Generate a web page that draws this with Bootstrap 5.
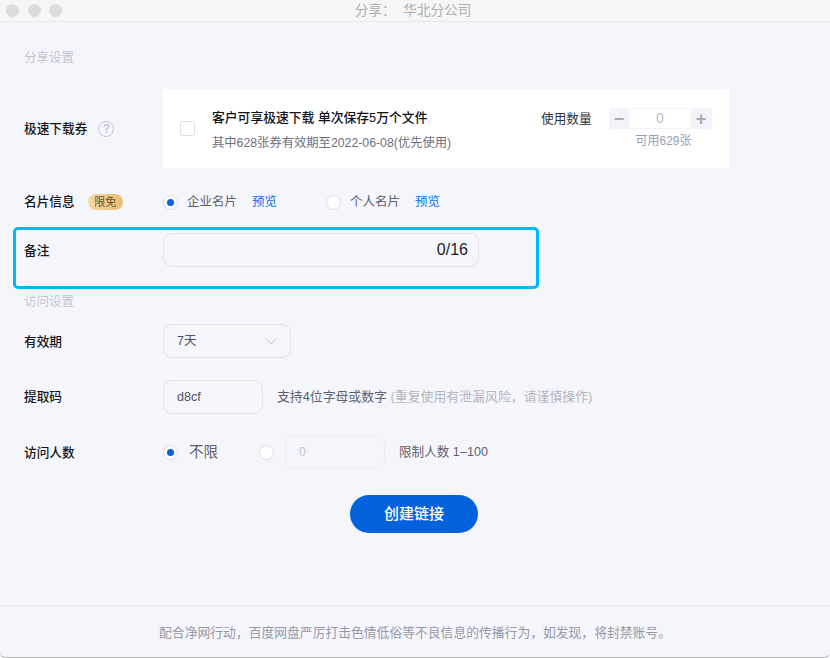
<!DOCTYPE html>
<html lang="zh-CN">
  <head>
    <meta charset="UTF-8" />
    <title>分享</title>
    <link href="https://cdn.jsdelivr.net/npm/bootstrap@5.3.2/dist/css/bootstrap.min.css" rel="stylesheet" />
    <style>
      html, body { height: 658px; overflow: hidden; }
      body {
        background: #f5f6fb;
        color: #1b1c22;
        font-family: "Liberation Sans", "Noto Sans CJK SC", sans-serif;
        font-size: 12px;
      }
      .win-shell { width: 830px; height: 658px; border-bottom: 1px solid #b4b4b4; border-radius: 0 0 6px 6px; }
      .title-bar { height: 22px; background: #f6f6f6; border-bottom: 1px solid #e9e9ea; padding-left: 6px; }
      .light { width: 13px; height: 13px; border-radius: 50%; background: #dcdcdc; margin-right: 8.5px; }
      .title-text { left: 0; right: 4px; top: 2px; text-align: center; font-size: 13.6px; line-height: 18px; color: #aeaeae; word-spacing: 4px; }
      .form-area { padding: 0 24px; }
      .sec-title { color: #c3c5d0; font-size: 12.5px; line-height: 18px; }
      .field-label { width: 139px; flex: none; font-size: 12.7px; font-weight: 500; color: #15161c; line-height: 18px; }
      .label-low { padding-top: 2px; }
      .help-mark { width: 16px; height: 16px; border: 1px solid #c5c6d0; border-radius: 50%; color: #b4b6c2; font-size: 12px; line-height: 14px; text-align: center; margin-left: 11px; font-weight: 400; }
      .free-tag { width: 35px; height: 16px; margin-left: 13px; border-radius: 8px; background: linear-gradient(90deg, #f4d9a6, #e9bb72); color: #6e5330; font-size: 11px; line-height: 16px; text-align: center; font-weight: 400; }
      .voucher-box { width: 566px; height: 79px; background: #fff; padding: 0 17px; }
      .fake-check { width: 15px; height: 15px; border: 1px solid #dfe0e6; border-radius: 2px; margin-right: 17px; }
      .voucher-text { padding-top: 2px; }
      .voucher-head { font-size: 12.8px; font-weight: 500; color: #111217; line-height: 18px; }
      .voucher-sub { font-size: 12.3px; color: #6d6f7e; line-height: 16px; margin-top: 8px; }
      .qty-label { font-size: 12.7px; color: #30313a; line-height: 18px; width: 68px; }
      .stepper { width: 103px; height: 21px; background: #f3f4f9; border-radius: 4px; }
      .stepper-val { width: 62px; background: #fff; color: #bfc1cb; font-size: 14px; line-height: 19px; text-align: center; }
      .step-mark { width: 20px; color: #a8aab6; font-size: 18px; font-weight: 700; line-height: 20px; text-align: center; }
      .avail-text { font-size: 12px; color: #9a9caa; line-height: 16px; text-align: center; margin-top: 4px; width: 103px; margin-left: 71px; }
      .qty-box { width: 171px; }
      .fake-radio { width: 15px; height: 15px; border: 1px solid #dcdde4; border-radius: 50%; background: #fff; flex: none; }
      .fake-radio.is-on::after { content: ""; display: block; width: 7px; height: 7px; margin: 3px; border-radius: 50%; background: #0463dc; }
      .radio-text { color: #5d5f6e; font-size: 12.5px; line-height: 18px; margin-left: 9px; }
      .preview-link { color: #0a6fe8; font-size: 12.5px; line-height: 18px; margin-left: 15px; text-decoration: none; }
      .note-frame { width: 526px; height: 62px; margin: 16px 0 0 -11px; border: 3px solid #00b8ff; border-radius: 5px; padding: 3px 0 0 8px; }
      .box-field { border: 1px solid #e3e4ea; border-radius: 9px; height: 34px; color: #50525f; font-size: 12.5px; line-height: 32px; }
      .note-input { width: 316px; text-align: right; padding-right: 10px; color: #1c1d24; font-size: 16px; }
      .note-label { width: 139px; padding-top: 9px; }
      .term-select { width: 128px; padding: 0 13px; }
      .code-input { width: 100px; padding: 0 13px; }
      .count-input { width: 100px; padding: 0 13px; margin-left: 11px; color: #c4c6d0; border-color: #eceef3; }
      .hint-text { color: #5f6170; font-size: 12.85px; line-height: 18px; margin-left: 14px; }
      .hint-text span { color: #b4b6c2; font-size: 12.9px; }
      .limit-hint { font-size: 12.6px; }
      .none-text { color: #5d5f6e; font-size: 14.5px; line-height: 20px; margin: 0 41px 0 11px; }
      .create-btn { width: 128px; height: 38px; border-radius: 19px; background: #0463dc; border: 0; color: #fff; font-size: 15px; font-weight: 500; padding: 0; }
      .foot-bar { border-top: 1px solid #ebecf1; height: 51px; margin-top: 72px; color: #9698a6; font-size: 12.8px; line-height: 53px; text-align: center; }
      .gap-voucher { margin-top: 22px; }
      .gap-card { margin-top: 25px; }
      .gap-note { margin-top: 4px; }
      .gap-term { margin-top: 13px; }
      .gap-code { margin-top: 22px; }
      .gap-count { margin-top: 21px; }
      .gap-first { margin-top: 27px; }
      .gap-btn { margin-top: 26px; padding-left: 326px; }
      .personal-radio { margin-left: 49px; }
    </style>
  </head>
  <body>
    <div class="win-shell">
      <div class="title-bar d-flex align-items-center position-relative">
        <span class="light"></span><span class="light"></span><span class="light"></span>
        <div class="title-text position-absolute">分享： 华北分公司</div>
      </div>

      <div class="form-area">
        <div class="sec-title gap-first">分享设置</div>

        <div class="d-flex align-items-center gap-voucher">
          <div class="field-label d-flex align-items-center">极速下载券<span class="help-mark">?</span></div>
          <div class="voucher-box d-flex align-items-center">
            <span class="fake-check"></span>
            <div class="flex-grow-1 voucher-text">
              <div class="voucher-head">客户可享极速下载 单次保存5万个文件</div>
              <div class="voucher-sub">其中628张券有效期至2022-06-08(优先使用)</div>
            </div>
            <div class="qty-box">
              <div class="d-flex align-items-center">
                <div class="qty-label">使用数量</div>
                <div class="stepper d-flex align-items-center p-0">
                  <span class="step-mark">−</span><span class="stepper-val">0</span><span class="step-mark">+</span>
                </div>
              </div>
              <div class="avail-text">可用629张</div>
            </div>
          </div>
        </div>

        <div class="d-flex align-items-center gap-card">
          <div class="field-label d-flex align-items-center">名片信息<span class="free-tag">限免</span></div>
          <span class="fake-radio is-on"></span><span class="radio-text">企业名片</span><a class="preview-link" href="#">预览</a>
          <span class="fake-radio personal-radio"></span><span class="radio-text">个人名片</span><a class="preview-link" href="#">预览</a>
        </div>

        <div class="note-frame d-flex align-items-start">
          <div class="field-label note-label">备注</div>
          <div class="box-field note-input">0/16</div>
        </div>

        <div class="sec-title gap-note">访问设置</div>

        <div class="d-flex align-items-center gap-term">
          <div class="field-label label-low">有效期</div>
          <div class="box-field term-select d-flex align-items-center justify-content-between">
            <span>7天</span>
            <svg width="12" height="7" viewBox="0 0 12 7" fill="none" stroke="#c4c6d0"><path d="M.5.5 6 6 11.500.5"/></svg>
          </div>
        </div>

        <div class="d-flex align-items-center gap-code">
          <div class="field-label">提取码</div>
          <div class="box-field code-input">d8cf</div>
          <div class="hint-text">支持4位字母或数字 <span>(重复使用有泄漏风险，请谨慎操作)</span></div>
        </div>

        <div class="d-flex align-items-center gap-count">
          <div class="field-label label-low">访问人数</div>
          <span class="fake-radio is-on"></span><span class="none-text">不限</span>
          <span class="fake-radio"></span>
          <div class="box-field count-input">0</div>
          <div class="hint-text limit-hint">限制人数 1–100</div>
        </div>

        <div class="d-flex gap-btn">
          <button type="button" class="btn create-btn">创建链接</button>
        </div>
      </div>

      <div class="foot-bar">配合净网行动，百度网盘严厉打击色情低俗等不良信息的传播行为，如发现，将封禁账号。</div>
    </div>
    <script src="https://cdn.jsdelivr.net/npm/bootstrap@5.3.2/dist/js/bootstrap.bundle.min.js"></script>
  </body>
</html>
